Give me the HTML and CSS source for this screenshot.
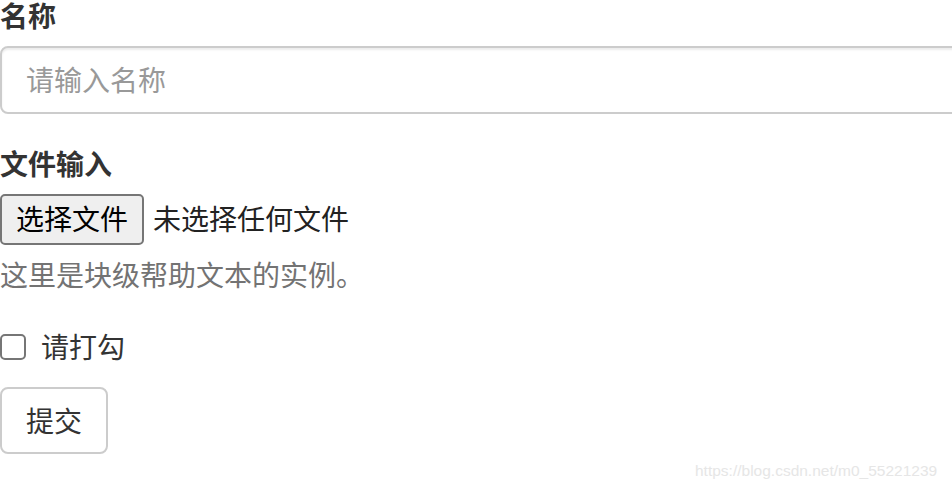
FILE: index.html
```html
<!DOCTYPE html>
<html lang="zh-CN">
<head>
<meta charset="utf-8">
<title>表单</title>
<link rel="stylesheet" href="styles.css">
</head>
<body>
<form class="form">
  <div class="form-group">
    <label class="label" for="name">名称</label>
    <input class="input" id="name" type="text" placeholder="请输入名称">
  </div>
  <div class="form-group">
    <label class="label">文件输入</label>
    <div class="file-row">
      <span class="file-btn">选择文件</span>
      <span class="file-text">未选择任何文件</span>
    </div>
    <p class="help">这里是块级帮助文本的实例。</p>
  </div>
  <div class="check-row">
    <span class="check-box"></span>
    <span class="check-text">请打勾</span>
  </div>
  <button class="btn" type="button">提交</button>
</form>
<div class="watermark">https://blog.csdn.net/m0_55221239</div>
</body>
</html>
```
FILE: styles.css
```css
html, body {
  margin: 0;
  padding: 0;
  background: #fff;
  overflow: hidden;
  width: 952px;
  height: 490px;
}
.form {
  width: 1000px;
  margin-top: -4px;
  font-family: "Liberation Sans", "Noto Sans CJK SC", sans-serif;
  font-size: 28px;
  line-height: 40px;
  color: #333;
}
.form-group {
  margin-bottom: 30px;
}
.label {
  display: block;
  font-weight: bold;
  line-height: 44px;
  margin-bottom: 6px;
}
.input {
  display: block;
  box-sizing: border-box;
  width: 100%;
  height: 68px;
  padding: 14px 24px 10px;
  border: 2px solid #ccc;
  border-radius: 8px;
  box-shadow: inset 0 2px 2px rgba(0,0,0,.075);
  font: inherit;
  color: #555;
  outline: none;
}
.input::placeholder {
  color: #999;
}
.file-row {
  display: flex;
  align-items: center;
  height: 51px;
}
.file-btn {
  box-sizing: border-box;
  height: 51px;
  width: 144px;
  padding-top: 3px;
  display: flex;
  align-items: center;
  justify-content: center;
  background: #efefef;
  border: 2px solid #767676;
  border-radius: 5px;
  color: #000;
}
.file-text {
  margin-left: 9px;
  padding-top: 3px;
  color: #222;
}
.help {
  margin: 12px 0 0;
  color: #737373;
}
.check-row {
  display: flex;
  align-items: center;
  height: 40px;
  margin-top: 2px;
  margin-bottom: 20px;
}
.check-box {
  box-sizing: border-box;
  width: 26px;
  height: 26px;
  border: 2px solid #767676;
  border-radius: 5px;
  margin-right: 15px;
}
.check-text {
  padding-top: 4px;
  color: #333;
}
.btn {
  display: block;
  box-sizing: border-box;
  height: 67px;
  padding: 14px 24px 10px;
  font: inherit;
  color: #333;
  background: #fff;
  border: 2px solid #ccc;
  border-radius: 8px;
}
.watermark {
  position: absolute;
  left: 695px;
  top: 462px;
  font-family: "Liberation Sans", sans-serif;
  font-size: 15.5px;
  color: #e6e6e6;
}
```
